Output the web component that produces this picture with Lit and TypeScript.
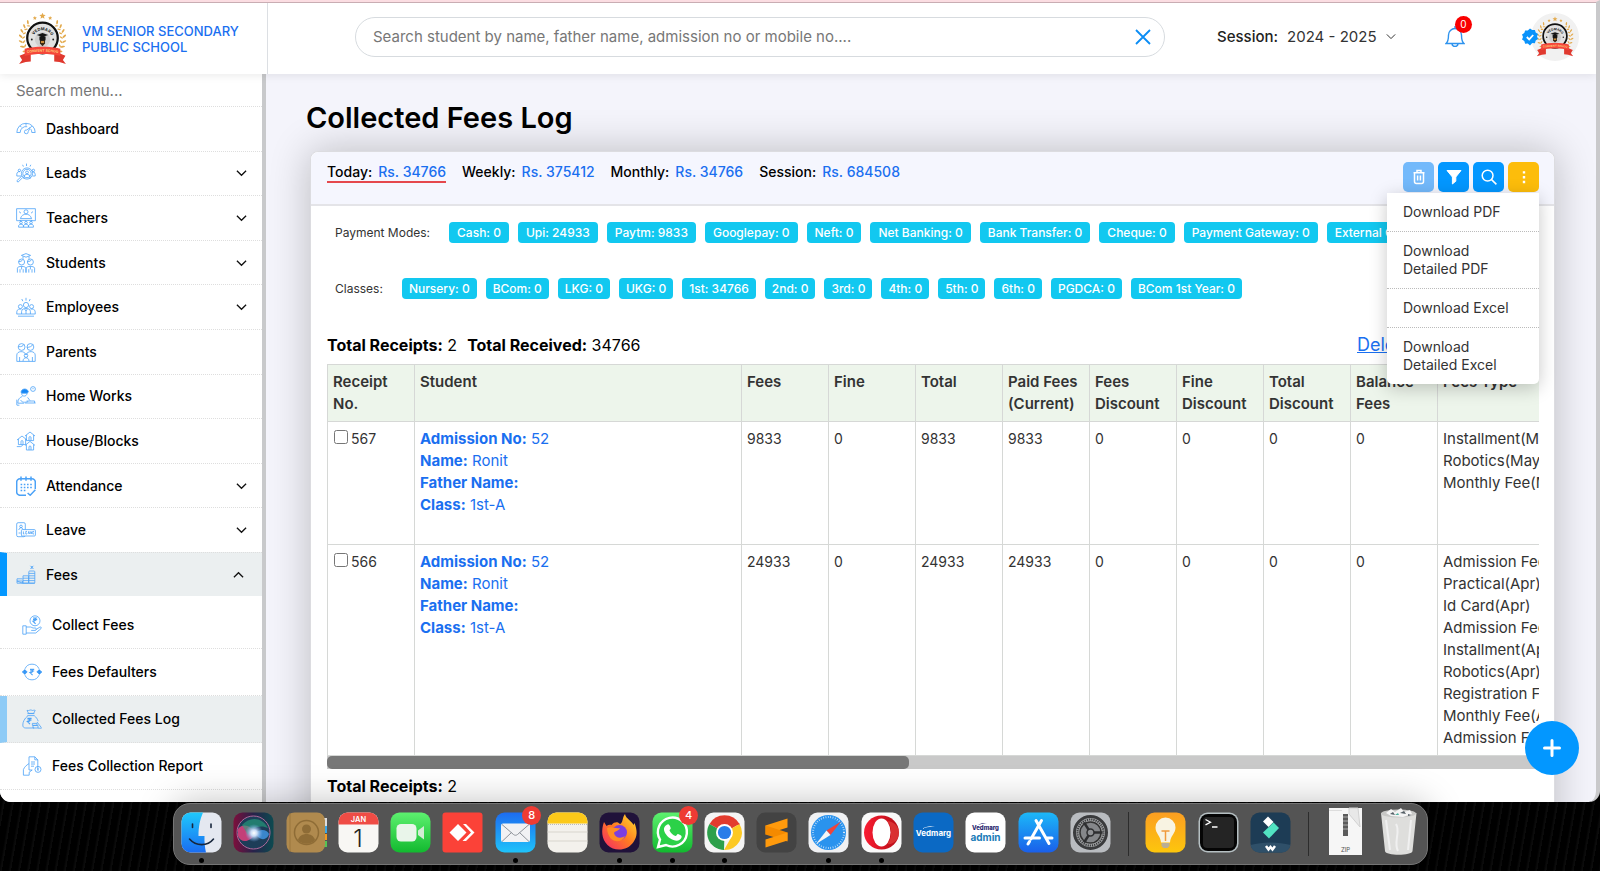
import { LitElement, html, svg, css, nothing } from "lit";
import type { TemplateResult } from "lit";
import { customElement, property } from "lit/decorators.js";
import { classMap } from "lit/directives/class-map.js";

const person = (x: number, y: number, r: number) => svg`
  <circle cx=${x} cy=${y} r=${r}/>
  <path d="M${x - r - 1.6} ${y + r + 5}v-1.6a${r + 1.6} ${r + 1.6} 0 0 1 ${2 * r + 3.2} 0v1.6"/>`;
const house = (x: number, y: number) => svg`
  <path d="M${x - 5} ${y}l5-4 5 4M${x - 3.6} ${y - 1}v5.6h7.2v-5.6M${x - 1} ${y + 4.6}v-3a1 1 0 0 1 2 0v3"/>`;
const rupee = (x: number, y: number) => svg`
  <path d="M${x - 2} ${y - 2.6}h4.2M${x - 2} ${y - 1}h4.2M${x - 2} ${y - 2.6}c3.6 0 3.6 3.2 0 3.2l2.6 2.6" stroke-width="1.1"/>`;

const menuIcons: Record<string, unknown> = {
  dashboard: svg`<path d="M.8 13.500a9.200 9.200 0 1 1 18.400 0h-3.400a5.800 5.800 0 0 0-1-3.400M.8 13.500h3.400a5.800 5.800 0 0 1 7-5.800M10 4.300v2.400M4 6.800l1.600 1.600M16.200 7l-1.400 1.400"/><path d="M14.400 8.200L10.800 11a1.900 1.900 0 1 0 1.400 1.600z"/>`,
  leads: svg`<circle cx="11" cy="10.500" r="5.600"/><circle cx="11" cy="10.500" r="4.200"/>${person(11, 9.4, 1.4)}<path d="M6.800 14.400L2 19.200l-1.200-1.400 5-4.800M16.600 13h2.600v-1.800a2.600 2.600 0 0 0-2.600-2.400M5.400 13H.8v-1.800A2.600 2.600 0 0 1 4 8.600M10.500 3V.6M7.400 3.600l-.8-1.800M14 3.600l.8-1.800"/><circle cx="17.400" cy="7.400" r="1.200"/><circle cx="3.400" cy="7.400" r="1.200"/>`,
  teachers: svg`<path d="M.6 12.600V.7h18.800v12H15M.6 12.700H5"/><circle cx="10" cy="3.800" r="2"/><path d="M4.400 10.600c1-3.400 3.400-4.400 5.600-4.400s4.600 1 5.600 4.400zM3 3.600l2 1.600M17 3.600l-2 1.600M3.600 12.400h12.800"/><circle cx="5" cy="14.600" r="1.300"/><circle cx="10" cy="14.600" r="1.300"/><circle cx="15" cy="14.600" r="1.300"/><path d="M2.600 19.200v-1.200c0-2.400 4.800-2.400 4.800 0v1.200zM7.600 19.200v-1.200c0-2.400 4.800-2.400 4.800 0v1.200zM12.600 19.200v-1.200c0-2.400 4.800-2.400 4.800 0v1.200z"/>`,
  students: svg`<path d="M5.400 2.400L10 .6l4.600 1.800L10 4.200zM7 3.400v2.400M13 3.400v2.400"/><circle cx="5.600" cy="9" r="3"/><circle cx="14.400" cy="9" r="3"/><path d="M2.600 8.600c2 0 3.400-.6 4-1.800M11.400 8.600c2 0 3.400-.6 4-1.800"/><path d="M1.400 19.600v-4.400c0-2.400 8.400-2.400 8.400 0v4.400M10.200 19.600v-4.400c0-2.400 8.400-2.400 8.400 0v4.400M4 19.600v-3.400M7.200 19.600v-3.400M12.800 19.600v-3.400M16 19.600v-3.400M5.600 13.400v3M14.400 13.400v3"/>`,
  employees: svg`<circle cx="10" cy="8" r="2.600"/><circle cx="4.400" cy="9.600" r="2"/><circle cx="15.600" cy="9.600" r="2"/><path d="M5.600 17v-2.600c0-4 8.800-4 8.800 0V17M.8 17v-2.200c0-2.600 3-3.200 4.600-2.600M19.200 17v-2.200c0-2.600-3-3.200-4.600-2.600M8.600 12l1.400 2 1.400-2M10 14v3M.6 17h18.800M2 19.200h16M10 3.600V.8M6.800 4.200L5.800 2M13.200 4.200l1-2.200"/>`,
  parents: svg`<circle cx="5.600" cy="5" r="3.400"/><circle cx="14.400" cy="5" r="3.400"/><path d="M2.400 4.600c3 .4 4.600-.6 5.600-2.200M11 5.400c2.600 0 4.600-1 6-2.800"/><path d="M.8 19.400V13c0-4 7.600-5 9.200 0M19.200 19.400V13c0-4-7.600-5-9.200 0M3.600 19.400V15M16.400 19.400V15M.8 19.400h18.400"/><circle cx="10" cy="13.600" r="1.800"/><path d="M7 19.200c0-4.600 6-4.600 6 0"/>`,
  homeworks: svg`<path d="M5 6.600c0-4.400 6.200-4.800 7.400-1l-1 1.600H6z" fill="#1687f5"/><path d="M5.600 7.400c0 3.400 5 3.800 5.400 0M6.400 10.400c-3 1-4.600 3.200-4.600 6.800h6.400M4.800 14c.6 2.600 4 2.600 7.400 1.600M11.600 11.400l2.400 3.200"/><circle cx="17" cy="3" r="2.400"/><path d="M17 2v1.200M.8 19.200v-5.600M9 17h10.600M10.600 15h8v2M1 19.200h2.400"/>`,
  houses: svg`${house(14, 5)}${house(6, 9)}${house(14, 14.4)}<path d="M.8 15.600h4l2-1.400"/>`,
  attendance: svg`<path d="M10 19.300H4a3.300 3.300 0 0 1-3.300-3.300V6A3.300 3.300 0 0 1 4 2.700h12A3.300 3.300 0 0 1 19.300 6v7M5 .4v4.400M10 .4v4.400M15 .4v4.400" stroke-width="1.500"/><path d="M4.600 8.500h11.400M4.600 11.500h11.400M4.600 14.500h6" stroke-dasharray="1.600 1.600" stroke-width="1.500"/><path d="M11.600 17l2.600 2.200 5.200-5.400" stroke-width="1.500"/>`,
  leave: svg`<rect x=".7" y="2.700" width="8.600" height="14" rx="1.400"/><circle cx="5" cy="6.400" r="1.300"/><path d="M2.800 10c.4-3 4-3 4.400 0M2.600 13h2"/><rect x="5.400" y="9.600" width="14" height="6.400" rx="1" fill="#fff"/><path d="M7.400 11.400v2.600h1M11 11.400h-1.200v2.600h1.200M12 14l.8-2.600.8 2.600M14.400 11.400l.7 2.600.7-2.600M18 11.400h-1.200v2.600h1.200" stroke-width=".8"/>`,
  fees: svg`<path d="M1 18.200v-4.400h5.600M1 16h5.600v2.200zM7 18.200v-7.400h5.400M7 13.200h5.600M7 15.600h5.600M7 18.200h5.600v-7.400M1 18.200h18"/><rect x="12.800" y="6" width="6" height="12.200" rx=".8"/><path d="M12.800 8.400h6M12.800 10.800h6M12.800 13.200h6M12.800 15.600h6M14.400.8l3 3M17.400.8l-3 3M15.900 1v3"/>`,
  collect: svg`<circle cx="13" cy="5.800" r="5"/>${rupee(13, 5.6)}<path d="M.8 10.800h3.400v8.400H.8zM4.200 12h4.400c1 0 1.600 1 2.400 1h2.400a1.300 1.300 0 0 1 0 2.400H9.200M13.800 14.600l4-2.400c1.400-.6 2 .6 1.200 1.400l-5.200 4.400H4.200"/>`,
  defaulters: svg`<path d="M3 6.800a7.600 7.600 0 0 1 14 0M17 13.200a7.600 7.600 0 0 1-14 0"/><path d="M.4 10h4.800L2.800 7.600zM.6 10h4.400l-2.200 2.400zM19.600 10h-4.800l2.400-2.400zM19.600 10h-4.400l2.200 2.400z" fill="#1687f5"/>${rupee(10, 10)}`,
  log: svg`<path d="M5.400 4.600h7M5.600 6.600h6.600M5 1.400l1.600 3h5l1.600-3c-1.400-.8-2.200.6-3.400-.2-1.800-.8-2.400.8-4.800.2zM6 6.600C2.400 9.600.8 13 .8 16c0 2 1 3 3 3h8.400M12.200 6.600c2 1.600 3.200 3.400 4 5.600"/>${rupee(7.4, 12)}<path d="M10.400 14.400h4.600v2h-4.600zM11 16.400h5v2.600h-5zM15 13l4.400 5.600M16 19.200h3.600"/>`,
  report: svg`<path d="M7 14V.8h5.800l3 3V14M12.800.8v3h3M1.400 19.200v-5.600c1-2.600 3-4.400 5.600-6M1.400 19.200h5.800v-3l3-2.200H7M9 6h4M9 8h4M9 10.200h3"/><circle cx="16" cy="13.400" r="3"/><path d="M16 12v3"/>`,
};

interface Entry { label: string; icon: string; expandable?: boolean; }

const entries: Entry[] = [
  { label: "Dashboard", icon: "dashboard" },
  { label: "Leads", icon: "leads", expandable: true },
  { label: "Teachers", icon: "teachers", expandable: true },
  { label: "Students", icon: "students", expandable: true },
  { label: "Employees", icon: "employees", expandable: true },
  { label: "Parents", icon: "parents" },
  { label: "Home Works", icon: "homeworks" },
  { label: "House/Blocks", icon: "houses" },
  { label: "Attendance", icon: "attendance", expandable: true },
  { label: "Leave", icon: "leave", expandable: true },
];
const feeEntries: Entry[] = [
  { label: "Collect Fees", icon: "collect" },
  { label: "Fees Defaulters", icon: "defaulters" },
  { label: "Collected Fees Log", icon: "log" },
  { label: "Fees Collection Report", icon: "report" },
];

const stats = [["Today:", "Rs. 34766"], ["Weekly:", "Rs. 375412"], ["Monthly:", "Rs. 34766"], ["Session:", "Rs. 684508"]];
const modes = ["Cash: 0", "Upi: 24933", "Paytm: 9833", "Googlepay: 0", "Neft: 0", "Net Banking: 0", "Bank Transfer: 0", "Cheque: 0", "Payment Gateway: 0", "External Gateway: 0"];
const classes = ["Nursery: 0", "BCom: 0", "LKG: 0", "UKG: 0", "1st: 34766", "2nd: 0", "3rd: 0", "4th: 0", "5th: 0", "6th: 0", "PGDCA: 0", "BCom 1st Year: 0"];
const columns = ["Receipt No.", "Student", "Fees", "Fine", "Total", "Paid Fees (Current)", "Fees Discount", "Fine Discount", "Total Discount", "Balance Fees", "Fees Type"];
const receipts = [
  { no: "567", amounts: ["9833", "0", "9833", "9833", "0", "0", "0", "0"], types: ["Installment(May)", "Robotics(May)", "Monthly Fee(May)"] },
  { no: "566", amounts: ["24933", "0", "24933", "24933", "0", "0", "0", "0"], types: ["Admission Fee(Apr)", "Practical(Apr)", "Id Card(Apr)", "Admission Fee(Apr)", "Installment(Apr)", "Robotics(Apr)", "Registration Fee(Apr)", "Monthly Fee(Apr)", "Admission Form(Apr)"] },
];
const downloads = ["Download PDF", "Download Detailed PDF", "Download Excel", "Download Detailed Excel"];

const chevron = (up = false) => html`<svg class="chevron" viewBox="0 0 12 8" aria-hidden="true"><path d=${up ? "M1 6.500l5-5 5 5" : "M1 1.500l5 5 5-5"}/></svg>`;

@customElement("school-crest")
class SchoolCrest extends LitElement {
  static styles = css`
    :host { display: block; }
    svg { display: block; width: 100%; height: 100%; }
    text { font-family: Inter, sans-serif; font-weight: 700; }
  `;
  render() {
    const leaves = [0, 1, 2, 3, 4, 5, 6];
    const star = "M0-3.200l.9 2 2.200.2-1.700 1.500.6 2.200L0 1.500l-2 1.200.6-2.200L-3.100-1l2.200-.2z";
    return html`<svg viewBox="0 0 48 52" role="img" aria-label="School crest">
      <g fill="#e3aa4d">
        <path transform="translate(24 4)" d=${star}/>
        <path transform="translate(16.500 6) scale(.65)" d=${star}/>
        <path transform="translate(31.500 6) scale(.65)" d=${star}/>
        ${leaves.map((i) => svg`<g>
          <ellipse cx="24" cy="4.500" rx=".9" ry="2.200" transform=${`rotate(${-42 - i * 14} 24 26) rotate(35 24 4.500)`}/>
          <ellipse cx="24" cy="7.500" rx=".7" ry="1.800" transform=${`rotate(${-48 - i * 13} 24 26) rotate(-40 24 7.500)`}/>
          <ellipse cx="24" cy="4.500" rx=".9" ry="2.200" transform=${`rotate(${42 + i * 14} 24 26) rotate(-35 24 4.500)`}/>
          <ellipse cx="24" cy="7.500" rx=".7" ry="1.800" transform=${`rotate(${48 + i * 13} 24 26) rotate(40 24 7.500)`}/>
        </g>`)}
      </g>
      <circle cx="24" cy="25.500" r="15" fill="#e2e2e2" stroke="#111" stroke-width="2.200"/>
      <circle cx="24" cy="27" r="7.500" fill="#cfcfcf"/>
      <path id="arc" d="M14 28a10 10 0 0 1 20 0" fill="none"/>
      <text font-size="4" fill="#222"><textPath href="#arc" startOffset="18%">VEDMARG</textPath></text>
      <circle cx="13.500" cy="27" r=".9" fill="#222"/><circle cx="34.500" cy="27" r=".9" fill="#222"/>
      <path d="M18.500 22.500l5.500-2 5.500 2-5.500 2zM21 24h6v3c0 3-6 3-6 0z" fill="#151515"/>
      <path d="M21.500 28h5v3l-2.500 2.500-2.500-2.500z" fill="#3b2a14"/>
      <path d="M22.500 28.500h3v2h-3z" fill="#c78a3c"/>
      <path d="M1.500 43l6-2.500 5 1v7l-5 .5-6.500 2 3-4zM46.500 43l-6-2.500-5 1v7l5 .5 6.500 2-3-4z" fill="#e0392f"/>
      <path d="M6.500 36c11-2.500 24-2.500 35 0v7c-11-2.500-24-2.500-35 0z" fill="#f5463a"/>
      <path id="rib" d="M8 40.500c10-2 22-2 32 0" fill="none"/>
      <text font-size="3.400" fill="#ffd27a"><textPath href="#rib" startOffset="3%">CONVENT SCHOOL</textPath></text>
    </svg>`;
  }
}

const app = (bg: string, content: unknown) => svg`<rect x=".5" y=".5" width="40" height="40" rx="9" fill=${bg}/>${content}`;

interface DockApp { name: string; art: TemplateResult | unknown; running?: boolean; badge?: string; }

const dockApps: (DockApp | null)[] = [
  { name: "Finder", running: true, art: svg`
    <defs><linearGradient id="a" x2="0" y2="1"><stop stop-color="#1fc8fb"/><stop offset="1" stop-color="#1a6df2"/></linearGradient></defs>
    ${app("#e4e8f0", svg`<path d="M9.500.5H22c-3 7-4.500 14-4.500 23.500h6c-.2 6 .3 11 1.500 16.500H9.500a9 9 0 0 1-9-9v-22a9 9 0 0 1 9-9z" fill="url(#a)"/>
    <path d="M11.500 12v3.500M30 12v3.500M8.500 27c6.500 7.500 18 7.500 24 0" stroke="#17263c" stroke-width="1.600" fill="none" stroke-linecap="round"/>`)}` },
  { name: "Siri", art: svg`
    <defs><linearGradient id="b" x2="1"><stop stop-color="#7d0f3c"/><stop offset=".5" stop-color="#27224a"/><stop offset="1" stop-color="#0c4a50"/></linearGradient>
    <radialGradient id="b2"><stop stop-color="#fff"/><stop offset=".35" stop-color="#c8dcf5"/><stop offset="1" stop-color="#6da4e8" stop-opacity="0"/></radialGradient></defs>
    ${app("url(#b)", svg`<circle cx="20.500" cy="20.500" r="16.500" fill="#1d3d58"/><path d="M5 17c6-7 13-2 18 4-5 9-15 11-18 3z" fill="#e0407e" opacity=".85"/><path d="M9 13c8-9 20-8 26 3-8-4-17 0-20 7z" fill="#26a67e" opacity=".6"/><path d="M22 21c6-5 12-3 14 1-2 7-10 7-14-1z" fill="#3e8ed8" opacity=".9"/><circle cx="21" cy="21" r="9" fill="url(#b2)"/><circle cx="20.500" cy="20.500" r="16.500" fill="none" stroke="#b06a9c"/>`)}` },
  { name: "Contacts", art: svg`<path d="M36 6h5v8h-5z" fill="#ddd"/><path d="M36 14h5v7h-5z" fill="#3aa8e8"/><path d="M36 22h5v6h-5z" fill="#f39a1f"/><path d="M36 29h5v6h-5z" fill="#55c455"/>
    <rect x=".5" y=".5" width="38.500" height="40" rx="8" fill="#b08a4e"/><path d="M4 1v39" stroke="#9a763c"/><circle cx="20.500" cy="20.500" r="12" fill="none" stroke="#8e6c36" stroke-width="1.500"/><circle cx="20.500" cy="17" r="4.500" fill="#8e6c36"/><path d="M12 28c2-8 15-8 17 0-4 5-13 5-17 0z" fill="#8e6c36"/>` },
  { name: "Calendar", art: app("#f8f7f4", svg`<path d="M9.500.5h22a9 9 0 0 1 9 9V12.500H.5V9.500a9 9 0 0 1 9-9z" fill="#ef4c45"/><text x="20.500" y="9.500" font-size="7.500" font-weight="600" fill="#fff" text-anchor="middle">JAN</text><text x="20" y="34.500" font-size="24" font-weight="300" fill="#222" text-anchor="middle">1</text>`) },
  { name: "FaceTime", art: svg`<defs><linearGradient id="c" x2="0" y2="1"><stop stop-color="#5df16f"/><stop offset="1" stop-color="#12b92f"/></linearGradient></defs>${app("url(#c)", svg`<rect x="6.500" y="12" width="20" height="17.500" rx="4.500" fill="#e9f5ea"/><path d="M28 18.500l6-4.500v13.500l-6-4.500z" fill="#d2ecd4"/>`)}` },
  { name: "AnyDesk", art: svg`<rect x=".5" y=".5" width="40" height="40" rx="3" fill="#fb4238"/><path d="M7.500 20.500l8.500-8.500 8.500 8.500-8.500 8.500zM21 12h3l8.500 8.500L24 29h-3.500l8.500-8.500z" fill="#fff"/>` },
  { name: "Mail", running: true, badge: "8", art: svg`<defs><linearGradient id="d" x2="0" y2="1"><stop stop-color="#1d6cf0"/><stop offset="1" stop-color="#1fc3fa"/></linearGradient></defs>${app("url(#d)", svg`<rect x="6" y="11.500" width="29" height="18.500" rx="2" fill="#f1f2f4"/><path d="M7 12.500l11.500 10c1.400 1 2.600 1 4 0L34 12.500M7 29.500l9.500-9M34 29.500l-9.500-9" stroke="#8d9299" fill="none"/>`)}` },
  { name: "Notes", art: app("#f3f1ec", svg`<path d="M9.500.5h22a9 9 0 0 1 9 9V11.500H.5V9.500a9 9 0 0 1 9-9z" fill="#fcc919"/><path d="M.5 20h40M.5 29h40" stroke="#d8d5cd"/><path d="M1 12.500h39" stroke="#bbb" stroke-dasharray="1 1"/>`) },
  { name: "Firefox", running: true, art: svg`<defs><linearGradient id="e" x1="1" x2="0" y2="1"><stop stop-color="#ffe02e"/><stop offset=".5" stop-color="#ff7a22"/><stop offset="1" stop-color="#f5246c"/></linearGradient></defs>${app("#20123a", svg`<path d="M5 10l2.500 4c1.500-1 3-1.500 5-1 2-2.500 4.500-3 6.500-2.500L21 12c3-1 2-6 5-10 1 5 6 6 8.500 11l1-2c3 8 3 13-1 19-6 9-19 10-26 3C2.500 27 2 18 5 10z" fill="url(#e)"/><circle cx="20.500" cy="20.500" r="7.500" fill="#7b3ee0"/><path d="M8 16c5-2 8 1 13 0-1 3-5 3-6 5 1 5 7 6 11 3-3 8-17 8-18-8z" fill="#ff8b25"/>`)}` },
  { name: "WhatsApp", running: true, badge: "4", art: svg`${app("url(#c)", svg`<path d="M6 35l2-7.500A14.500 14.500 0 1 1 14 33z" fill="#2bd148" stroke="#fff" stroke-width="2.400"/><path d="M14.500 13c2-1.500 3-.5 4.200 3 .3 1-1 1.500-1.200 2.500 1.500 3 3.500 4.500 6 5.500 1 0 1.500-2 2.500-2 3.500 1.500 4 2 3.500 3.500-1 3-4.500 4-8 2.500-5-2-8.500-5.500-9.500-10-.3-2 .5-4 2.500-5z" fill="#fff"/>`)}` },
  { name: "Chrome", running: true, art: app("#f5f5f5", svg`<path d="M20.500 20.500L5.500 12a17.300 17.300 0 0 1 30 0z" fill="#e33b2e"/><path d="M20.500 20.500L20 38A17.300 17.300 0 0 1 5.500 12z" fill="#2da04b"/><path d="M20.500 20.500h0L35.500 12A17.300 17.300 0 0 1 20 38l8-14z" fill="#fcc924"/><path d="M20.500 12.500h15.200L35 11H20z" fill="#e33b2e"/><circle cx="20.500" cy="20.500" r="8.500" fill="#fff"/><circle cx="20.500" cy="20.500" r="6.600" fill="#2a7de9"/>`) },
  { name: "Sublime Text", art: app("#434343", svg`<path d="M9.500 13.500L31.500 6.500v9L9.500 22.500z" fill="#ff9a0c"/><path d="M9.500 13.500v9l22 7v-9z" fill="#f48a00"/><path d="M9.500 27.500v8l22-7v-8z" fill="#ff9a0c"/>`) },
  { name: "Safari", running: true, art: app("#f0f1f3", svg`<circle cx="20.500" cy="20.500" r="17.500" fill="#2a93ee"/><circle cx="20.500" cy="20.500" r="15.500" fill="none" stroke="#cfe6fb" stroke-width="2" stroke-dasharray=".7 1.700"/><path d="M33 9.500L22.500 23l-4-4.500z" fill="#f0433a"/><path d="M8 32l10.500-13.500 4 4.500z" fill="#f6f6f6"/>`) },
  { name: "Opera", running: true, art: svg`<defs><linearGradient id="f" x2="1"><stop stop-color="#fb1c32"/><stop offset="1" stop-color="#b30d16"/></linearGradient></defs>${app("#fafafa", svg`<ellipse cx="20.500" cy="20.500" rx="17.500" ry="17" fill="url(#f)"/><ellipse cx="20.500" cy="20.500" rx="9" ry="14" fill="#fff"/><path d="M26 32c5-4 6-17 0-23 6 0 12 5 12 11.500C38 28 32 33 26 32z" fill="#e5403c" opacity=".7"/>`)}` },
  { name: "Vedmarg", art: app("#0b69c4", svg`<text x="20.500" y="24" font-size="8" font-weight="700" fill="#fff" text-anchor="middle">Vedmarg</text><path d="M9 17c4-3 9-3.500 14-2-5-.6-10 0-14 2z" fill="#fff"/>`) },
  { name: "Vedmarg admin", art: app("#fff", svg`<text x="20.500" y="18" font-size="6" font-weight="800" fill="#28256e" text-anchor="middle">Vedmarg</text><path d="M13 13c3-2 6-2 9-1-3-.4-6 0-9 1z" fill="#28256e"/><text x="20.500" y="29" font-size="10" font-weight="700" fill="#1a7cb8" text-anchor="middle">admin</text>`) },
  { name: "App Store", art: svg`<defs><linearGradient id="g" x2="0" y2="1"><stop stop-color="#1cb8f8"/><stop offset="1" stop-color="#1a5fea"/></linearGradient></defs>${app("url(#g)", svg`<path d="M23.500 8.500L13 27M18 8.500L31 31.500M7 26h14.500M28 26h6M11.500 29.500L10 32" stroke="#fff" stroke-width="3" stroke-linecap="round"/>`)}` },
  { name: "System Settings", art: app("#b9bcc0", svg`<circle cx="20.500" cy="20.500" r="16" fill="#a2a4a6" stroke="#3a3b3d" stroke-width="3"/><circle cx="20.500" cy="20.500" r="13" fill="none" stroke="#3a3b3d" stroke-width="2" stroke-dasharray="1.200 1"/><circle cx="20.500" cy="20.500" r="10.500" fill="#85878a" stroke="#333" stroke-width="1.500"/><path d="M20.500 20.500h12M20.500 20.500l-6.500-10M20.500 20.500l-6.500 10" stroke="#2e2f31" stroke-width="2.500"/><circle cx="20.500" cy="20.500" r="3.500" fill="#8e9093" stroke="#2e2f31" stroke-width="1.500"/>`) },
  null,
  { name: "Tips", art: svg`<defs><linearGradient id="h" x2="0" y2="1"><stop stop-color="#fb9e22"/><stop offset="1" stop-color="#fdc60c"/></linearGradient></defs>${app("url(#h)", svg`<path d="M10.500 15.500a10 10 0 0 1 20 0c0 6-5 8-5.500 15h-9c-.5-7-5.500-9-5.500-15z" fill="#f8f3e2"/><path d="M16.500 19h8M20.500 19v10" stroke="#f09a3c" stroke-width="1.500"/><path d="M16.500 31h8v3l-2 2h-4l-2-2z" fill="#b9ae94"/>`)}` },
  { name: "Terminal", art: svg`<rect x=".5" y=".5" width="40" height="40" rx="9" fill="#b5bfc2"/><rect x="2" y="2" width="37" height="37" rx="8" fill="#050505"/><rect x="5" y="5" width="31" height="31" rx="4" fill="#242424"/><path d="M7.500 7.500l5 2.700-5 2.700M14 15h5.500" stroke="#fff" stroke-width="1.300" fill="none"/>` },
  { name: "Filmora", art: app("#1d3c55", svg`<path d="M.5 33c12-3.500 28-3.500 40 0a9 9 0 0 1-9 7.500h-22a9 9 0 0 1-9-7.500z" fill="#2f5069"/><path d="M18 4.500l5.500 5.500-5 5-5.500-5.500z" fill="#fff"/><path d="M23.500 10.500l5.500 5.500-10 10.500-6-6z" fill="#52e3c2"/><path d="M16 34l2.500 3.500 2-2.500 2 2.500L25 34" stroke="#fff" stroke-width="2.500" fill="none"/>`) },
  null,
  { name: "Archive", art: svg`<path d="M4-4h33v47H4z" fill="#f6f6f6"/><path d="M4-1.500h13" stroke="#ddd"/><path d="M18 2h5v22h-5z" fill="#5b5b5b"/><path d="M18 5h5M18 9h5M18 13h5M18 17h5" stroke="#aaa"/><path d="M24-4h9L35 15 24 2z" fill="#e8e8e8" stroke="#d2d2d2"/><text x="20.500" y="40" font-size="6" fill="#555" text-anchor="middle">ZIP</text>` },
  { name: "Trash", art: svg`<path d="M3 1l4 38c.4 5 27 5 27.500 0l4-38z" fill="#dededc"/><path d="M8 8l4 30M33 8l-3 30M18 12c5 8-3 18 2 27" stroke="#f0f0f0" stroke-width="2" fill="none"/><ellipse cx="20.500" cy="1.500" rx="17.500" ry="4" fill="#c7c7c5"/><path d="M8 1l5-4 4 3 6-4 3 4 6-2 2 4-9 3-12-1z" fill="#f4f4f4"/><path d="M12 2l3-2 2 3zM22 1l4-2 2 3zM30 2l3 1-3 1z" fill="#555f66"/><path d="M17 3l3-2 1 2z" fill="#4cae9c"/>` },
];

@customElement("desktop-dock")
class DesktopDock extends LitElement {
  static styles = css`
    :host { display: block; }
    .dock {
      box-sizing: border-box; width: min(1255px, 100% - 24px); height: 62px; margin: 0 auto;
      display: flex; justify-content: space-between; padding: 8px 2px 0;
      background: #545454; border: 1px solid #757575; border-radius: 17px;
      box-shadow: 0 0 36px rgba(0, 0, 0, 0.26);
    }
    .slot { flex: 0 1 52px; position: relative; display: flex; flex-direction: column; align-items: center; gap: 5px; }
    .art { display: block; width: 41px; height: 41px; overflow: visible; }
    text { font-family: Inter, sans-serif; }
    .dot { width: 5px; height: 5px; border-radius: 50%; background: #000; }
    .badge {
      position: absolute; top: -6px; right: 0; width: 19px; height: 19px; border-radius: 50%;
      background: #ee3b34; color: #fff; font: 500 11px/19px Inter, sans-serif; text-align: center;
    }
    .rule { flex: 0 0 23px; display: flex; justify-content: center; }
    .rule::before { content: ""; width: 1px; height: 44px; background: #2c2c2c; }
  `;
  render() {
    return html`<div class="dock">${dockApps.map((a) => a === null
      ? html`<div class="rule"></div>`
      : html`<div class="slot">
          <svg class="art" viewBox="0 0 41 41" role="img" aria-label=${a.name}>${a.art}</svg>
          ${a.running ? html`<span class="dot"></span>` : nothing}
          ${a.badge ? html`<span class="badge">${a.badge}</span>` : nothing}
        </div>`)}</div>`;
  }
}

@customElement("side-menu")
class SideMenu extends LitElement {
  static styles = css`
    :host { display: block; font-family: Inter, sans-serif; background: #fff; }
    .search {
      display: block; box-sizing: border-box; width: 100%; height: 32px; padding: 0 16px; border: 0;
      background: none; font: 400 15px/20px Inter, sans-serif; color: #222; outline: none;
    }
    .search::placeholder { color: #777; opacity: 1; }
    ul { list-style: none; margin: 0; padding: 0; }
    .top { display: grid; grid-template-rows: repeat(10, 1fr); height: 446px; }
    .item {
      box-sizing: border-box; height: 100%; width: 100%; display: flex; align-items: center; gap: 10px;
      padding: 0 15px 0 16px; border-top: 1px dotted #dedede; color: #000;
      font-size: 14px; line-height: 20px; font-weight: 500; text-decoration: none;
    }
    .label { flex: 1; white-space: nowrap; }
    .icon { width: 20px; height: 20px; flex: none; fill: none; stroke: #4ba2f7; stroke-width: 0.8; }
    .chevron { width: 11px; height: 8px; fill: none; stroke: #111; stroke-width: 1.4; }
    .open { height: 44px; background: #ebeff0; border-left: 7px solid #0397ff; padding: 0 18px 0 9px; }
    .sub { padding-top: 6px; }
    .sub li { height: 47px; }
    .sub .item { border-top: 0; border-bottom: 1px dotted #dedede; padding-left: 22px; }
    .sub .current { background: #ebeff0; border-left: 7px solid #8ecbf6; padding-left: 15px; }
  `;
  icon(name: string) {
    return html`<svg class="icon" viewBox="0 0 20 20" aria-hidden="true">${menuIcons[name]}</svg>`;
  }
  render() {
    return html`
      <input class="search" type="search" placeholder="Search menu..." aria-label="Search menu">
      <nav>
        <ul class="top">
          ${entries.map((e) => html`<li><a class="item" href="#">${this.icon(e.icon)}<span class="label">${e.label}</span>${e.expandable ? chevron() : nothing}</a></li>`)}
        </ul>
        <a class="item open" href="#">${this.icon("fees")}<span class="label">Fees</span>${chevron(true)}</a>
        <ul class="sub">
          ${feeEntries.map((e) => html`<li><a class=${classMap({ item: true, current: e.icon === "log" })} href="#">${this.icon(e.icon)}<span class="label">${e.label}</span></a></li>`)}
        </ul>
      </nav>`;
  }
}

@customElement("top-bar")
class TopBar extends LitElement {
  static styles = css`
    :host { display: flex; align-items: center; background: #fff; font-family: Inter, sans-serif; box-sizing: border-box; padding: 0 17px 4px 0; }
    .brand {
      box-sizing: border-box; width: 268px; flex: none; align-self: stretch; display: flex; align-items: center; gap: 15px;
      margin-bottom: -4px; padding-left: 18px; border-right: 1px solid #dcdfe3; color: #1a6ff0; font-weight: 500; font-size: 13px; line-height: 16px;
    }
    .crest { width: 49px; height: 53px; flex: none; }
    .search {
      flex: 1; box-sizing: border-box; height: 40px; margin: 0 52px 0 87px; padding: 0 12px 0 17px;
      display: flex; align-items: center; border: 1px solid #d7dbdf; border-radius: 20px;
    }
    .search input { flex: 1; min-width: 0; border: 0; outline: none; background: none; padding: 0; font: 400 15px/22px Inter, sans-serif; color: #222; }
    .search input::placeholder { color: #777; opacity: 1; }
    button { border: 0; background: none; padding: 0; cursor: pointer; display: block; }
    .clear svg { display: block; width: 18px; height: 18px; stroke: #0b8df5; stroke-width: 1.8; }
    .session { width: 181px; display: flex; align-items: center; color: #333; font-size: 15px; line-height: 22px; }
    .session label { font-weight: 500; color: #222; margin-right: 9px; }
    .session select { appearance: none; border: 0; background: none; padding: 0; flex: 1; min-width: 0; font: 400 15px/22px Inter, sans-serif; color: #333; }
    .session svg { width: 10px; height: 7px; margin-right: 2px; fill: none; stroke: #333; stroke-width: 1.2; }
    .bell { position: relative; margin: 0 66px 0 47px; }
    .bell svg { display: block; width: 20px; height: 23px; fill: none; stroke: #2e93ee; stroke-width: 1.4; }
    .count { position: absolute; left: 10px; top: -9px; width: 17px; height: 17px; border-radius: 50%; background: #f90000; color: #fff; font: 400 10px/17px Inter, sans-serif; text-align: center; }
    .avatar { position: relative; width: 48px; height: 48px; box-sizing: border-box; padding: 2px 5px; border-radius: 50%; background: #f1f1f1; }
    .avatar school-crest { width: 38px; height: 43px; }
    .verified { position: absolute; left: -10px; top: 15px; width: 18px; height: 18px; }
  `;
  render() {
    return html`
      <div class="brand"><school-crest class="crest"></school-crest><span>VM SENIOR SECONDARY<br>PUBLIC SCHOOL</span></div>
      <div class="search">
        <input type="text" aria-label="Search student" placeholder="Search student by name, father name, admission no or mobile no....">
        <button class="clear" aria-label="Clear search"><svg viewBox="0 0 18 18"><path d="M2 2l14 14M16 2L2 16"/></svg></button>
      </div>
      <div class="session">
        <label for="session">Session:</label>
        <select id="session"><option>2024 - 2025</option></select>
        <svg viewBox="0 0 12 8" aria-hidden="true"><path d="M1 1.500l5 5 5-5"/></svg>
      </div>
      <button class="bell" aria-label="Notifications">
        <svg viewBox="0 0 20 23"><path d="M1 18.500c2-1.500 2.500-4 2.500-8.500a6.500 6.500 0 0 1 13 0c0 4.500.5 7 2.500 8.500zM7 18.800c.5 3.400 5.500 3.400 6 0M10 1v2.500"/></svg>
        <span class="count">0</span>
      </button>
      <div class="avatar">
        <school-crest></school-crest>
        <svg class="verified" viewBox="0 0 18 18" aria-label="Verified" role="img"><path d="M9 .5l2.200 1.600 2.700-.2.800 2.600 2.300 1.500-1 2.500 1 2.600-2.300 1.500-.8 2.600-2.700-.2L9 17.500l-2.200-2-2.700.2-.8-2.600L1 11.600l1-2.600-1-2.500 2.300-1.500.8-2.600 2.700.2z" fill="#0a93fb"/><path d="M5.800 9l2.400 2.400 4-4.400" stroke="#fff" stroke-width="1.800" fill="none"/></svg>
      </div>`;
  }
}

@customElement("fees-log")
class FeesLog extends LitElement {
  @property({ type: Boolean }) menuOpen = true;
  static styles = css`
    :host { display: block; padding: 26px 41px 0 44px; font-family: Inter, sans-serif; color: #333; }
    h1 { margin: 0 0 15px -4px; color: #000; font-size: 29px; line-height: 36px; font-weight: 600; }
    .card { background: #fff; border: 1px solid #dcdce0; border-radius: 8px; box-shadow: 0 0 40px rgba(0, 0, 0, 0.24); min-height: 700px; }
    .head { box-sizing: border-box; height: 54px; padding: 10px 15px 0 16px; display: flex; justify-content: space-between; background: #f5f6fe; border-bottom: 2px solid #e4e4e8; border-radius: 8px 8px 0 0; }
    .stats { display: flex; align-items: flex-start; gap: 16px; font-size: 14px; line-height: 19px; font-weight: 500; color: #000; }
    .stat { display: flex; gap: 6px; border-bottom: 2px solid transparent; }
    .stat:first-child { border-color: #e5484d; }
    .amount { color: #1a6ff0; }
    .tools { position: relative; display: flex; gap: 4px; height: 30px; }
    .tool { width: 31px; height: 30px; padding: 0; border: 0; border-radius: 5px; background: #0397ff; display: grid; place-items: center; }
    .tool svg { width: 16px; height: 16px; fill: none; stroke: #fff; stroke-width: 1.5; }
    .faded { background: #73b9fb; }
    .amber { background: #fdbd0b; }
    .menu { position: absolute; z-index: 2; right: 0; top: 31px; width: 152px; margin: 0; padding: 0; list-style: none; background: #fff; border-radius: 0 0 5px 5px; box-shadow: 0 4px 18px rgba(0, 0, 0, 0.22); }
    .menu li + li { border-top: 1px dotted #bbb; }
    .menu a { display: block; padding: 10px 16px; color: #333; font-size: 14px; line-height: 18px; text-decoration: none; }
    .body { padding: 16px 15px 0 16px; }
    .chips { display: flex; align-items: center; gap: 9px; height: 21px; margin: 0 0 35px 8px; overflow: hidden; white-space: nowrap; }
    .caption { font-size: 12px; line-height: 18px; margin-right: 10px; flex: none; }
    .chip { flex: none; padding: 0 8px; border-radius: 4px; background: #12c8f0; color: #fff; font-size: 12px; line-height: 21px; font-weight: 500; }
    .dense .chip { padding: 0 7px; }
    .totals { display: flex; justify-content: space-between; color: #000; font-size: 16px; line-height: 22px; margin-bottom: 8px; }
    .totals p { margin: 0; display: flex; gap: 10px; }
    b { font-weight: 700; }
    .deleted { width: 182px; font-size: 18px; color: #1a6ff0; white-space: nowrap; }
    .scroller { overflow: hidden; }
    table { width: 2528px; table-layout: fixed; border-collapse: collapse; font-size: 15px; line-height: 22px; }
    .narrow { width: 87px; }
    .wide { width: 327px; }
    th, td { padding: 6px 5px; border: 1px solid #d6d8d6; text-align: left; vertical-align: top; }
    th { background: #edf5eb; font-weight: 600; height: 44px; color: #333; }
    td { height: 110px; }
    .last td { height: 197px; }
    .figure { font-size: 14px; }
    .receipt { display: flex; align-items: flex-start; gap: 3px; }
    .receipt input { margin: 2px 0 0 1px; width: 14px; height: 14px; }
    .student { color: #1a6ff0; text-decoration: none; display: block; }
    .line { display: block; white-space: nowrap; }
    .track { height: 13px; background: #c9c9c9; }
    .thumb { height: 13px; width: 48%; border-radius: 5px; background: #777; }
    .foot { margin-top: 6px; }
  `;
  render() {
    return html`
      <h1>Collected Fees Log</h1>
      <section class="card">
        <div class="head">
          <div class="stats">${stats.map(([k, v]) => html`<span class="stat"><span>${k}</span><span class="amount">${v}</span></span>`)}</div>
          <div class="tools">
            <button class="tool faded" aria-label="Delete"><svg viewBox="0 0 16 16"><path d="M2.500 3.800h11M6 3.500V1.600h4v1.900M3.500 4v8.600a2 2 0 0 0 2 2h5a2 2 0 0 0 2-2V4M6.600 6.600v5M9.400 6.600v5"/></svg></button>
            <button class="tool" aria-label="Filter"><svg viewBox="0 0 16 16"><path d="M1 1.500h14L9.800 8v4.200L6.400 15V8z" fill="#fff" stroke-linejoin="round" stroke-width="1"/></svg></button>
            <button class="tool" aria-label="Search"><svg viewBox="0 0 16 16"><circle cx="6.600" cy="6.600" r="5.400"/><path d="M10.600 10.600l4.800 4.800"/></svg></button>
            <button class="tool amber" aria-label="More"><svg viewBox="0 0 16 16"><path d="M8 2.200v2.400M8 7v2.400M8 11.800v2.400" stroke-width="2.400"/></svg></button>
            ${this.menuOpen ? html`<ul class="menu">${downloads.map((d) => html`<li><a href="#">${d}</a></li>`)}</ul>` : nothing}
          </div>
        </div>
        <div class="body">
          <div class="chips"><span class="caption">Payment Modes:</span>${modes.map((m) => html`<span class="chip">${m}</span>`)}</div>
          <div class="chips dense"><span class="caption">Classes:</span>${classes.map((m) => html`<span class="chip">${m}</span>`)}</div>
          <div class="totals"><p><span><b>Total Receipts:</b> 2</span><span><b>Total Received:</b> 34766</span></p><a class="deleted" href="#">Deleted Receipts</a></div>
          <div class="scroller">
            <table>
              <colgroup><col class="narrow"><col class="wide">${[0, 1, 2, 3, 4, 5, 6, 7].map(() => html`<col class="narrow">`)}<col></colgroup>
              <thead><tr>${columns.map((c) => html`<th>${c}</th>`)}</tr></thead>
              <tbody>${receipts.map((r, i) => html`<tr class=${classMap({ last: i === receipts.length - 1 })}>
                <td class="figure"><label class="receipt"><input type="checkbox">${r.no}</label></td>
                <td><a class="student" href="#"><span class="line"><b>Admission No:</b> 52</span><span class="line"><b>Name:</b> Ronit</span><span class="line"><b>Father Name:</b></span><span class="line"><b>Class:</b> 1st-A</span></a></td>
                ${r.amounts.map((a) => html`<td class="figure">${a}</td>`)}
                <td>${r.types.map((t) => html`<span class="line">${t}</span>`)}</td>
              </tr>`)}</tbody>
            </table>
          </div>
          <div class="track"><div class="thumb"></div></div>
          <div class="totals foot"><p><span><b>Total Receipts:</b> 2</span></p></div>
        </div>
      </section>`;
  }
}

@customElement("app-root")
class AppRoot extends LitElement {
  static styles = css`
    :host { display: flex; flex-direction: column; height: 100vh; overflow: hidden; background: repeating-linear-gradient(100deg, #000 0 6px, #0b0b0b 8px 9px); font-family: Inter, sans-serif; }
    .window { position: relative; flex: 1; min-height: 0; box-sizing: border-box; border-top: 2px solid #fbdde2; border-right: 4px solid #c9c9cb; border-radius: 0 0 11px 11px; overflow: hidden; display: flex; flex-direction: column; background: #f4f4fb; }
    top-bar { flex: none; position: relative; z-index: 1; border-top: 1px solid #c9adb3; box-shadow: 0 2px 8px rgba(0, 0, 0, 0.08); height: 72px; }
    .columns { flex: 1; min-height: 0; display: flex; }
    side-menu { flex: none; width: 262px; border-right: 4px solid #c8c9cb; overflow: hidden; }
    fees-log { flex: 1; min-width: 0; overflow: hidden; }
    .add { position: absolute; right: 17px; bottom: 27px; width: 54px; height: 54px; padding: 0; border: 0; border-radius: 50%; background: #0397ff; display: grid; place-items: center; z-index: 2; }
    .add svg { width: 18px; height: 18px; stroke: #fff; stroke-width: 3; stroke-linecap: round; }
    desktop-dock { flex: none; position: relative; z-index: 3; padding: 1px 0 6px; }
  `;
  render() {
    return html`
      <div class="window">
        <top-bar></top-bar>
        <div class="columns"><side-menu></side-menu><fees-log></fees-log></div>
        <button class="add" aria-label="Add"><svg viewBox="0 0 18 18"><path d="M9 1.500v15M1.500 9h15"/></svg></button>
      </div>
      <desktop-dock></desktop-dock>`;
  }
}
